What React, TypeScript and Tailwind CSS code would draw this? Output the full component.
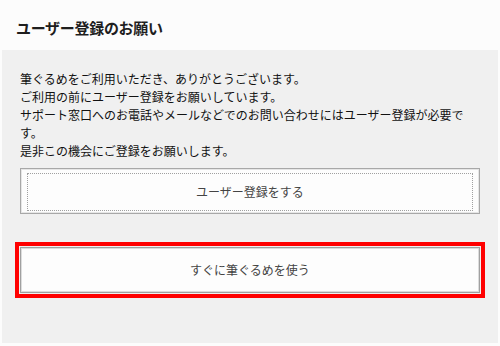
const jp = "font-['Segoe_UI','Noto_Sans_CJK_JP',sans-serif]";

export default function App() {
  return (
    <div className={`flex h-[346px] w-[500px] flex-col bg-[#fcfcfc] pb-[3px] pl-[2px] pr-[2px] pt-[2px] ${jp}`}>
      <header className="flex h-[48px] items-center pl-[14px] pt-[2px]">
        <h1 className="text-[15px] font-bold leading-none tracking-[-0.3px] text-[#1e1e1e]">ユーザー登録のお願い</h1>
      </header>

      <main className="flex-1 bg-[#f0f0f0] px-[18px] pt-[20px]">
        <p className="text-[12px] leading-[18px] text-[#111]">
          筆ぐるめをご利用いただき、ありがとうございます。
          <br />
          ご利用の前にユーザー登録をお願いしています。
          <br />
          サポート窓口へのお電話やメールなどでのお問い合わせにはユーザー登録が必要です。
          <br />
          是非この機会にご登録をお願いします。
        </p>

        <button className="mt-[8px] flex h-[46px] w-full border border-[#a8a8a8] bg-[#fdfdfd] px-[6px] pb-[2px] pt-[4px] shadow-[inset_0_0_0_1px_#e6e6e6]">
          <span className="flex flex-1 items-center justify-center border border-dotted border-[#a0a0a0] text-[12px] text-[#444]">
            ユーザー登録をする
          </span>
        </button>

        <button className="mt-[33px] flex h-[46px] w-full items-center justify-center rounded-none border border-[#a0a0a0] bg-[#fdfdfd] text-[12px] text-[#444] shadow-[inset_0_0_0_1px_#dcdcdc] outline-4 outline-offset-[1px] outline-[#ff0000] outline-solid">
          すぐに筆ぐるめを使う
        </button>
      </main>
    </div>
  );
}
